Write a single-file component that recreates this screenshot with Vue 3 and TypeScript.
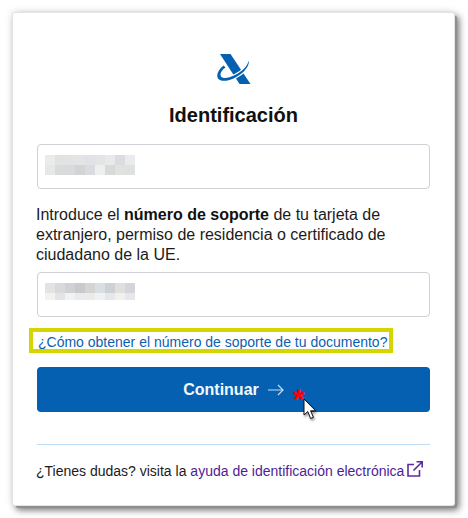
<script setup lang="ts">
const blurA = [
  ['#ebebeb', '#e2e2e3', '#e3e3e3', '#e4e4e4', '#e0e3e6', '#e4e4e6', '#e9e9e9', '#dcdcdf', '#e9ebee'],
  ['#e6e7e7', '#d9dadc', '#d9dadb', '#d3d4d5', '#dadbde', '#eef0ef', '#d8dad9', '#e0e2e0', '#dfe0e0'],
]
const blurB = [
  ['#e3e3e4', '#d9d9db', '#d1d1d4', '#c8c9cc', '#d6d4d3', '#d9dee2', '#cfd0d4', '#e0dfde', '#d3d5da'],
  ['#f2f2f1', '#e3e4e6', '#f0f2f3', '#eaecec', '#ebebe9', '#eff2f3', '#e6e7e9', '#f1f0ef', '#e6e7ea'],
]
</script>

<template>
  <div class="page">
    <div class="card">
      <svg class="logo" width="34" height="31" viewBox="0 0 34 31">
        <path d="M3 0H13.5L33.5 30H22.5Z" fill="#0560b2" />
        <path d="M6.5 11.5C1 16 -1 21 1 24.5C3.5 28 11 27.5 18.5 23.5C25 20 30.5 14.5 31.5 10C32 8.5 31.8 7.5 31.2 7C31.4 11 26 17 18 21C11 24.5 6 24.8 4 22.5C2.5 20 4.5 16 8.5 13.5Z" fill="#fff" stroke="#fff" stroke-width="2.4" />
        <path d="M6.5 11.5C1 16 -1 21 1 24.5C3.5 28 11 27.5 18.5 23.5C25 20 30.5 14.5 31.5 10C32 8.5 31.8 7.5 31.2 7C31.4 11 26 17 18 21C11 24.5 6 24.8 4 22.5C2.5 20 4.5 16 8.5 13.5Z" fill="#0560b2" />
      </svg>
      <h1 class="title">Identificación</h1>

      <div class="field">
        <div class="blur">
          <template v-for="(row, r) in blurA" :key="r">
            <i v-for="(c, i) in row" :key="i" :style="{ background: c }" />
          </template>
        </div>
      </div>

      <p class="intro">
        Introduce el <b>número de soporte</b> de tu tarjeta de extranjero, permiso de residencia o certificado de ciudadano de la UE.
      </p>

      <div class="field">
        <div class="blur blur--short">
          <template v-for="(row, r) in blurB" :key="r">
            <i v-for="(c, i) in row" :key="i" :style="{ background: c }" />
          </template>
        </div>
      </div>

      <a class="help">¿Cómo obtener el número de soporte de tu documento?</a>

      <button class="submit" type="button">
        Continuar
        <svg width="16" height="12" viewBox="0 0 16 12" fill="none" stroke="#c4dcf2" stroke-width="1.2">
          <path d="M0 6H15M10 1L15 6L10 11" />
        </svg>
      </button>

      <hr class="rule" />

      <p class="foot">
        ¿Tienes dudas? visita la <a class="foot__link">ayuda de identificación electrónica</a>
        <svg class="foot__icon" width="16" height="16" viewBox="0 0 16 16" fill="none" stroke="#5a2ca0" stroke-width="1.6">
          <path d="M7 3.5H1V15H12.5V9M6.5 9.5L15 1M9.5 0.8H15.2V6.5" />
        </svg>
      </p>

      <!-- annotation laid over the screenshot -->
      <span class="mark" />
      <span class="star">*</span>
      <svg class="cursor" width="15" height="23" viewBox="0 0 15 23">
        <path d="M1 1V17L4.8 13.6L7.6 20.5L10.4 19.3L7.6 12.8H12.6Z" fill="#fff" stroke="#111" stroke-width="1" stroke-linejoin="round" />
      </svg>
    </div>
  </div>
</template>

<style>
body { background: #fff; }
</style>

<style scoped>
.page {
  width: 468px;
  height: 518px;
  padding: 13px 14px 0 13px;
  box-sizing: border-box;
  font-family: "Liberation Sans", Arial, sans-serif;
  overflow: hidden;
}
.card {
  position: relative;
  box-sizing: border-box;
  width: 441px;
  height: 492px;
  padding: 41px 24px 0;
  background: #fff;
  border-radius: 2px;
  box-shadow: 0 0 0 1px #e4e4e4, 3px 3px 0 0 #8f8f8f, 4px 4px 7px 1px rgba(0, 0, 0, .55), -1px -1px 8px rgba(0, 0, 0, .12);
  display: flex;
  flex-direction: column;
}
.logo { align-self: center; margin-left: 0; }
.title {
  margin: 18px 0 0;
  font-size: 20px;
  line-height: 24px;
  font-weight: 700;
  text-align: center;
  color: #111;
}
.field {
  box-sizing: border-box;
  height: 45px;
  margin-top: 17px;
  padding: 10px 7px;
  border: 1px solid #d0d0d6;
  border-radius: 4px;
}
.blur {
  display: grid;
  grid-template-columns: repeat(9, 10px);
  grid-auto-rows: 10px;
}
.blur--short { grid-template-rows: 10px 7px; }
.intro {
  margin: 16px 0 0 -1px;
  font-size: 16px;
  line-height: 20px;
  color: #1b1b1b;
}
.intro b { font-weight: 700; color: #111; }
.intro + .field { margin-top: 7px; }
.help {
  margin-top: 16px;
  font-size: 14px;
  line-height: 18px;
  margin-left: 1px;
  color: #0b5fb0;
}
.submit {
  height: 45px;
  margin-top: 16px;
  border: 0;
  border-radius: 4px;
  background: #0560b2;
  color: #f4f8fc;
  font-family: inherit;
  font-size: 16px;
  font-weight: 700;
  display: flex;
  align-items: center;
  justify-content: center;
  gap: 9px;
}
.rule {
  width: 100%;
  margin: 32px 0 0;
  border: 0;
  border-top: 1px solid #bfdcf5;
}
.foot {
  margin: 16px 0 0 -1px;
  font-size: 14px;
  line-height: 18px;
  color: #1b1b1b;
  white-space: nowrap;
}
.foot__link { color: #4d1d95; }
.foot__icon { margin-left: 3px; vertical-align: -1px; }
.mark {
  position: absolute;
  left: 16px;
  top: 315px;
  width: 364px;
  height: 25px;
  box-sizing: border-box;
  border: 4px solid #d4d600;
}
.star {
  position: absolute;
  left: 280px;
  top: 371px;
  font-size: 30px;
  line-height: 30px;
  font-weight: 700;
  color: #f00;
}
.cursor {
  position: absolute;
  left: 290px;
  top: 385px;
  filter: drop-shadow(1px 2px 1px rgba(0, 0, 0, .4));
}
</style>
